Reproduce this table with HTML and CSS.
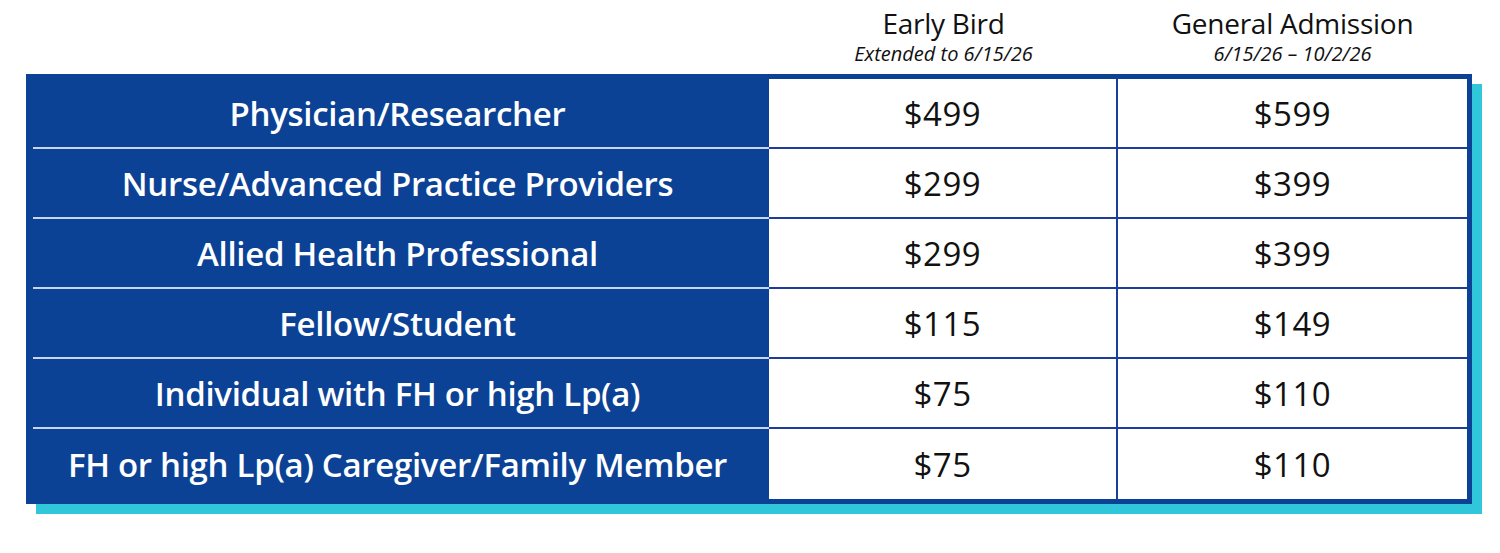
FILE: index.html
```html
<!DOCTYPE html>
<html lang="en">
<head>
<meta charset="utf-8">
<title>Registration Rates</title>
<link rel="stylesheet" href="styles.css">
</head>
<body>
<div class="page">
  <div class="head">
    <div class="head-spacer"></div>
    <div class="head-cell">
      <div class="head-title">Early Bird</div>
      <div class="head-sub">Extended to 6/15/26</div>
    </div>
    <div class="head-cell">
      <div class="head-title">General Admission</div>
      <div class="head-sub">6/15/26 – 10/2/26</div>
    </div>
  </div>
  <div class="rates">
    <div class="label">Physician/Researcher</div>
    <div class="price mid">$499</div>
    <div class="price">$599</div>

    <div class="label">Nurse/Advanced Practice Providers</div>
    <div class="price mid">$299</div>
    <div class="price">$399</div>

    <div class="label">Allied Health Professional</div>
    <div class="price mid">$299</div>
    <div class="price">$399</div>

    <div class="label">Fellow/Student</div>
    <div class="price mid">$115</div>
    <div class="price">$149</div>

    <div class="label">Individual with FH or high Lp(a)</div>
    <div class="price mid">$75</div>
    <div class="price">$110</div>

    <div class="label last">FH or high Lp(a) Caregiver/Family Member</div>
    <div class="price mid last">$75</div>
    <div class="price last">$110</div>
  </div>
</div>
</body>
</html>
```

FILE: styles.css
```css
* { box-sizing: border-box; }
html, body { margin: 0; padding: 0; background: #ffffff; }
body { font-family: "Open Sans", "Liberation Sans", sans-serif; color: #111; }

.page {
  padding-left: 26px;
  padding-bottom: 49px;
  width: 1500px;
}

.head {
  display: grid;
  grid-template-columns: 743px 349px 349px;
  height: 74px;
}
.head-cell {
  display: flex;
  flex-direction: column;
  align-items: center;
  padding-top: 6px;
}
.head-title {
  font-size: 28px;
  line-height: 34px;
  letter-spacing: -0.25px;
  color: #111;
}
.head-sub {
  margin-top: 2px;
  font-size: 20px;
  font-style: italic;
  line-height: 24px;
  letter-spacing: 0;
  color: #111;
}

.rates {
  display: grid;
  grid-template-columns: 743px 349px 349px;
  grid-auto-rows: 70px;
  width: 1446px;
  background: #0b4295;
  border-top: 5px solid #0b4295;
  border-right: 5px solid #0b4295;
  border-bottom: 5px solid #0b4295;
  box-shadow: 10px 10px 0 #31c7db;
}

.label {
  display: flex;
  align-items: center;
  justify-content: center;
  margin-left: 7px;
  padding-right: 7px;
  border-bottom: 2px solid #c9d5ec;
  color: #ffffff;
  font-size: 33px;
  font-weight: 550;
  letter-spacing: -0.3px;
}

.price {
  display: flex;
  align-items: center;
  justify-content: center;
  background: #ffffff;
  border-bottom: 2px solid #1d3c9c;
  font-size: 33px;
  color: #111;
  letter-spacing: 0.5px;
}
.price.mid { border-right: 2px solid #1d3c9c; }
.last { border-bottom: 0; }
```
